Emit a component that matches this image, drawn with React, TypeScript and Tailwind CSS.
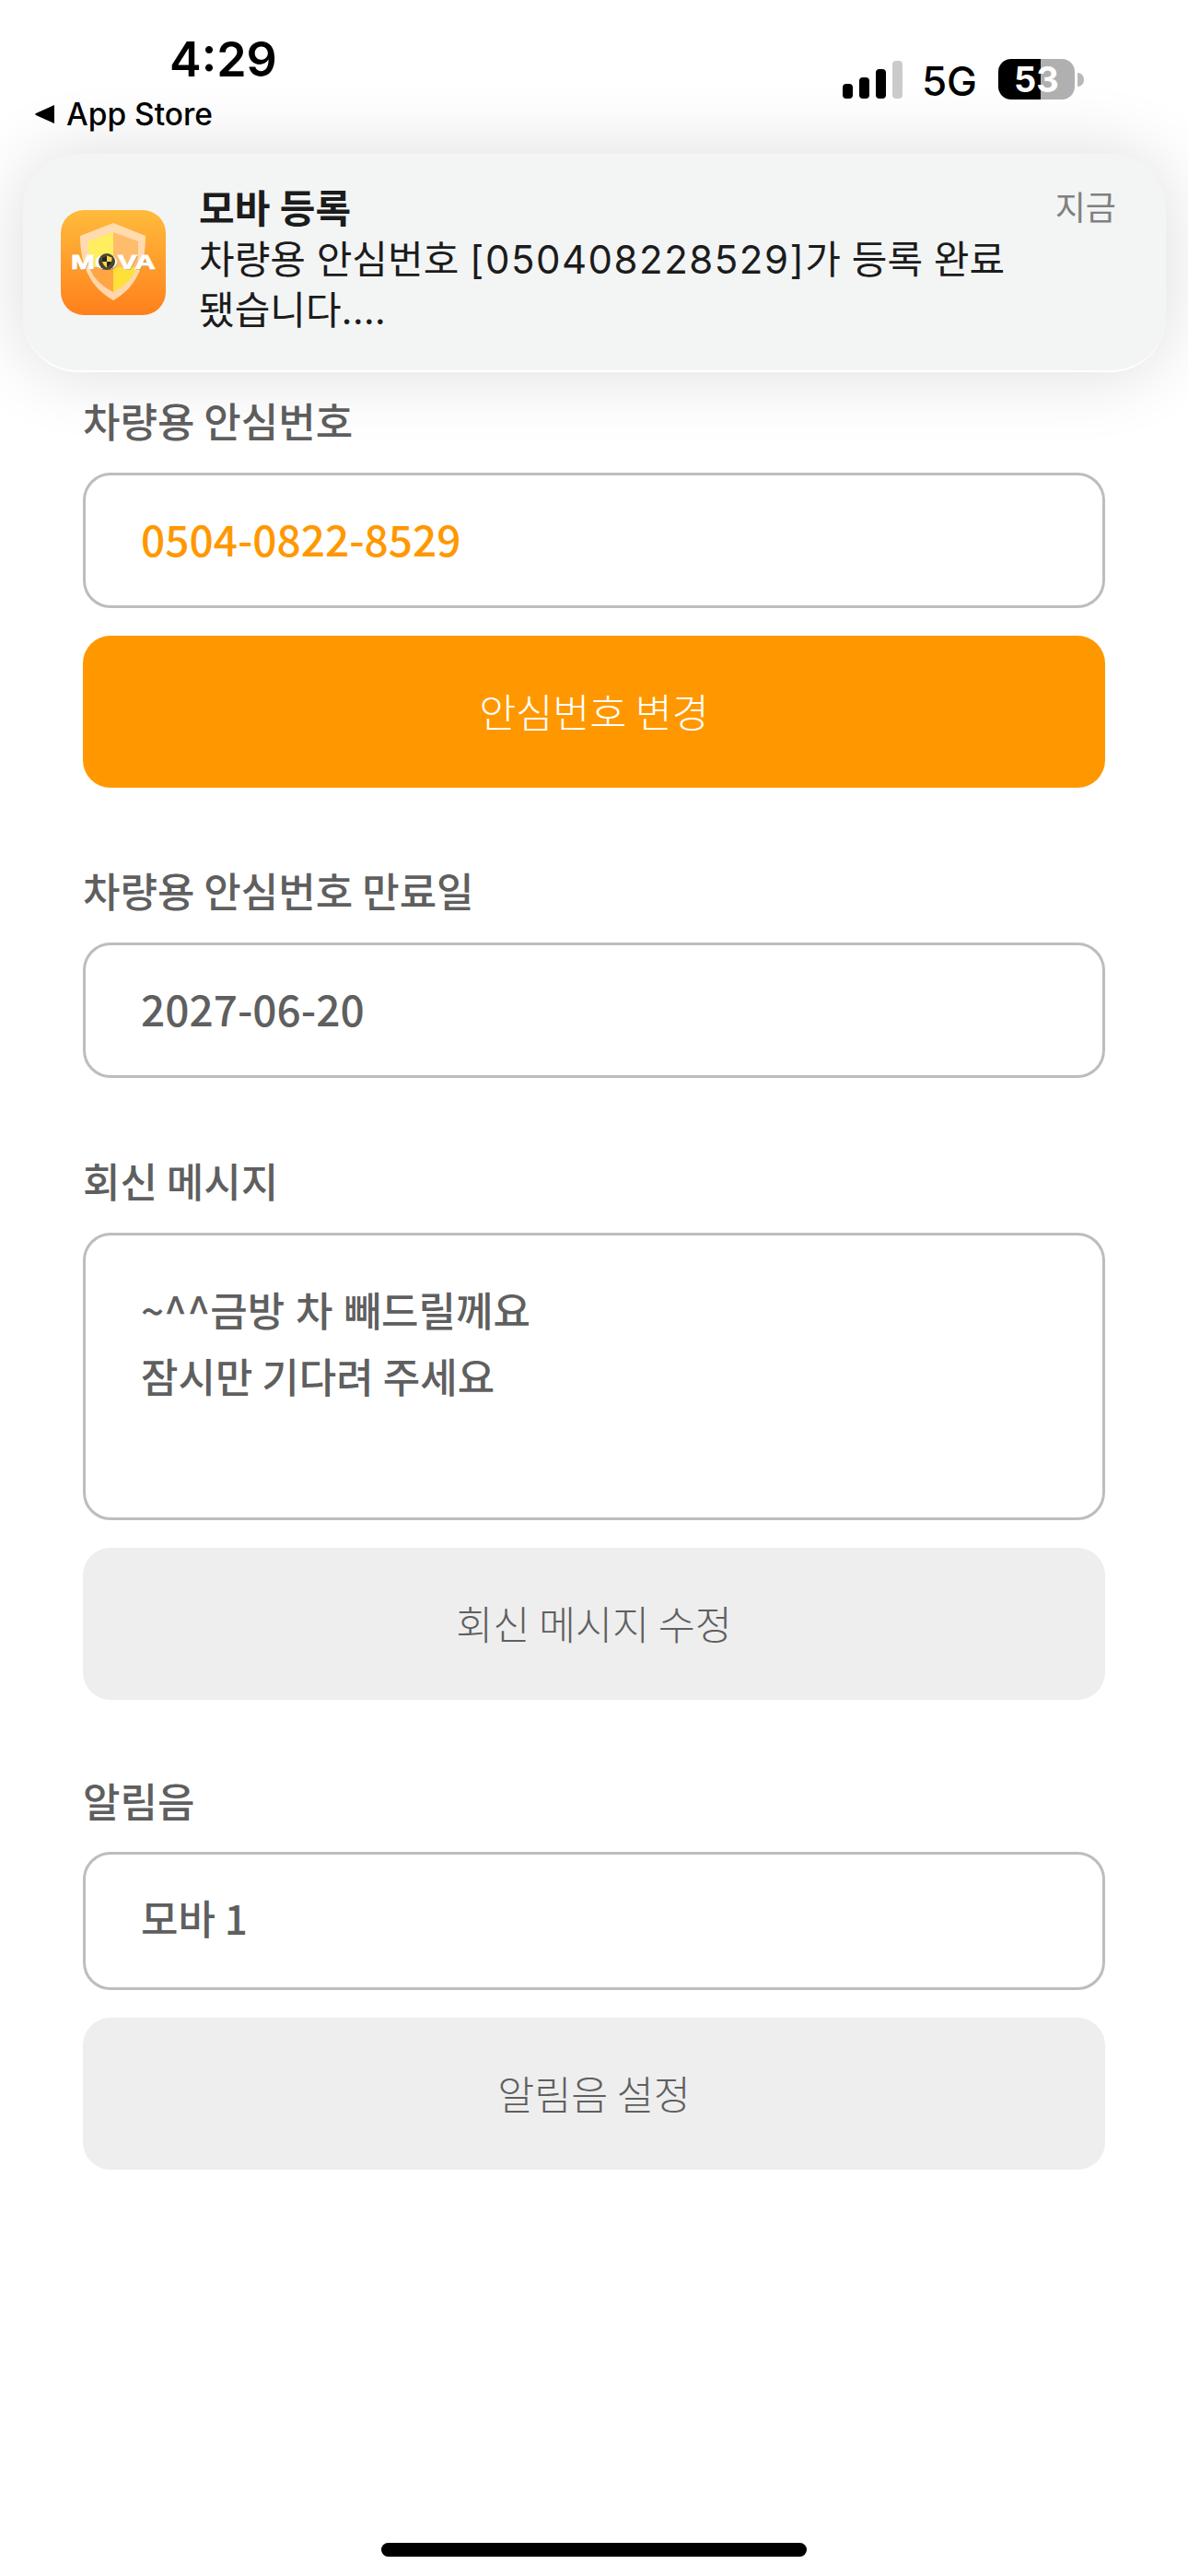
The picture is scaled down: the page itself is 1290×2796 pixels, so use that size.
const sans = 'font-["Noto_Sans_CJK_KR","Noto_Sans",sans-serif]';

function Label({ children }: { children: React.ReactNode }) {
  return <div className="h-[58px] pb-[3px] flex items-center text-[44px] font-medium text-[#5f5f5f] leading-none">{children}</div>;
}

function Field({ children, className }: { children: React.ReactNode; className: string }) {
  return (
    <div className={`rounded-[30px] border-[3px] border-[#bdbdbd] bg-white px-[60px] flex items-center font-medium ${className}`}>
      {children}
    </div>
  );
}

function Action({ children, primary }: { children: React.ReactNode; primary?: boolean }) {
  return (
    <div className={`mt-[30px] h-[165px] pb-[2px] rounded-[30px] flex items-center justify-center text-[43.5px] font-light ${primary ? 'bg-[#ff9800] text-white' : 'bg-[#eeeeee] text-[#5f5f5f]'}`}>
      {children}
    </div>
  );
}

function AppIcon() {
  return (
    <svg width="114" height="114" viewBox="0 0 114 114" className="shrink-0">
      <defs>
        <linearGradient id="bg" x1="0" y1="0" x2="0" y2="1">
          <stop offset="0" stopColor="#ffbb3c" />
          <stop offset="1" stopColor="#ff801c" />
        </linearGradient>
      </defs>
      <rect width="114" height="114" rx="25" fill="url(#bg)" />
      <path d="M57 14 L92 28 C92 60 82 84 57 98 C32 84 21 60 21 28 Z" fill="#ffe3c4" opacity="0.85" />
      <path d="M57 24 L57 62 L31 62 C30 53 30 44 30 34 Z" fill="#ffee5e" />
      <path d="M57 24 L84 34 C84 44 84 53 83 62 L57 62 Z" fill="#ffbc6a" />
      <path d="M31 62 C35 74 45 83 57 89 L57 62 Z" fill="#ffa544" />
      <path d="M57 62 L57 89 C69 83 79 74 83 62 Z" fill="#ffdf3a" />
      <text x="57.5" y="65" textAnchor="middle" fontFamily="Liberation Sans, sans-serif" fontWeight="700" fontSize="22" fill="#7a5a30" textLength="92" lengthAdjust="spacingAndGlyphs">MOVA</text>
      <text x="57" y="64" textAnchor="middle" fontFamily="Liberation Sans, sans-serif" fontWeight="700" fontSize="22" fill="#ffffff" stroke="#ffffff" strokeWidth="0.8" textLength="92" lengthAdjust="spacingAndGlyphs">MOVA</text>
      <circle cx="50" cy="56" r="9" fill="#4a4630" />
      <path d="M50 49.5 L55.5 51.5 C55.5 57 53.5 60.5 50 62.5 C46.5 60.5 44.5 57 44.5 51.5 Z" fill="#ffd84a" />
      <path d="M50 49.5 L50 56 L44.8 56 C44.5 54.5 44.5 53 44.5 51.5 Z M50 56 L55.2 56 C54.5 59 52.5 61 50 62.5 Z" fill="#26262a" />
    </svg>
  );
}

function StatusBar() {
  return (
    <div className="flex justify-between font-['Inter',sans-serif] text-black">
      <div className="pl-[38px] pt-[38px]">
        <div className="pl-[146px] text-[52px] font-semibold leading-[54px]">4:29</div>
        <div className="mt-[12px] flex items-center gap-[13px] text-[33.5px] font-medium leading-[40px]">
          <svg width="21" height="20" viewBox="0 0 21 20"><path d="M21 0 V20 L1 11 C0 10.4 0 9.6 1 9 Z" fill="#000" /></svg>
          App Store
        </div>
      </div>
      <div className="pr-[113px] mt-[56px] flex items-center self-start h-[60px]">
        <svg width="65" height="41" viewBox="0 0 65 41" fill="#000">
          <rect x="0" y="25" width="11" height="16" rx="4" />
          <rect x="18" y="18" width="11" height="23" rx="4" />
          <rect x="36" y="9" width="11" height="32" rx="4" />
          <rect x="54" y="0" width="11" height="41" rx="4" fill="#cbcbcb" />
        </svg>
        <span className="ml-[21px] mt-[3px] text-[44px] font-medium leading-none">5G</span>
        <div className="ml-[23px] w-[83px] h-[44px] rounded-[14px] bg-[linear-gradient(90deg,#000_0_55%,#b0b0b0_55%_100%)] flex items-center justify-center text-white text-[38px] font-bold leading-none">53</div>
        <div className="ml-[3px] w-[7px] h-[15px] rounded-r-full bg-[#b8b8b8]" />
      </div>
    </div>
  );
}

export default function App() {
  return (
    <div className={`relative w-[1290px] h-[2796px] bg-white overflow-hidden ${sans}`}>
      <div className="absolute top-0 left-0 right-0 z-10">
        <StatusBar />
        <div className="ml-[25px] mr-[24px] mt-[23px] h-[237px] rounded-[60px] bg-[#f3f5f5] border-b-2 border-white shadow-[0_0_80px_rgba(0,0,0,0.14)] pl-[41px] pr-[54px] flex items-center gap-[36px] font-['Inter','Noto_Sans_CJK_KR',sans-serif]">
          <AppIcon />
          <div className="flex-1 -mt-[6px] text-[#1c1c1c]">
            <div className="flex justify-between items-start">
              <div className="text-[42px] font-semibold leading-[55px]">모바 등록</div>
              <div className="text-[36px] leading-[55px] text-[#808080] font-normal">지금</div>
            </div>
            <div className="text-[42px] leading-[55px]">
              <div>차량용 안심번호 <span className="tracking-[1.5px]">[050408228529]</span>가 등록 완료</div>
              <div>됐습니다....</div>
            </div>
          </div>
        </div>
      </div>

      <div className="px-[90px] pt-[428px]">
        <Label>차량용 안심번호</Label>
        <Field className="mt-[27px] h-[147px] pb-[5px] text-[46px] text-[#ff9800]">0504-0822-8529</Field>
        <Action primary>안심번호 변경</Action>

        <div className="mt-[83px]">
          <Label>차량용 안심번호 만료일</Label>
          <Field className="mt-[27px] h-[147px] pb-[5px] text-[46px] text-[#5f5f5f]">2027-06-20</Field>
        </div>

        <div className="mt-[83px]">
          <Label>회신 메시지</Label>
          <div className="mt-[27px] h-[312px] rounded-[30px] border-[3px] border-[#bdbdbd] px-[60px] pt-[44px] text-[44px] font-medium leading-[72px] text-[#5f5f5f]">
            <div className="[word-spacing:2px]">~^^금방 차 빼드릴께요</div>
            <div>잠시만 기다려 주세요</div>
          </div>
          <Action>회신 메시지 수정</Action>
        </div>

        <div className="mt-[81px]">
          <Label>알림음</Label>
          <Field className="mt-[26px] h-[150px] pb-[9px] text-[44px] text-[#5f5f5f]">모바 1</Field>
          <Action>알림음 설정</Action>
        </div>
      </div>

      <div className="absolute bottom-[21px] left-[414px] w-[462px] h-[15px] rounded-full bg-black" />
    </div>
  );
}
